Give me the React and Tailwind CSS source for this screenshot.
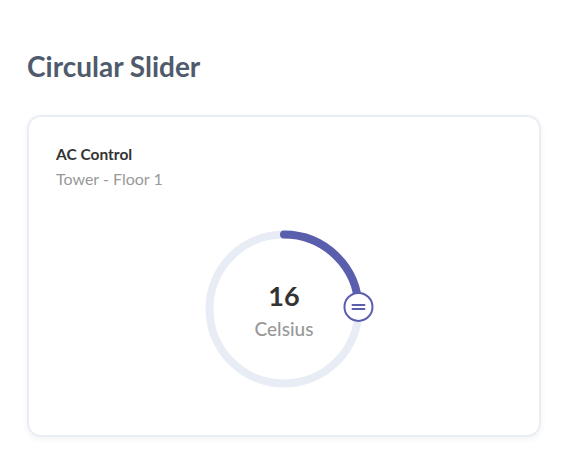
import React from 'react';

const CircularSlider = ({ value, unit }) => {
  const cx = 90;
  const cy = 90;
  const r = 74.5;
  const angle = 88.4; // degrees clockwise from top
  const rad = (angle * Math.PI) / 180;
  const ex = cx + r * Math.sin(rad);
  const ey = cy - r * Math.cos(rad);

  return (
    <div className="relative w-[180px] h-[180px]">
      <svg width="180" height="180" viewBox="0 0 180 180">
        <circle cx={cx} cy={cy} r={r} fill="none" stroke="#e8edf5" strokeWidth="8" />
        <path
          d={`M ${cx} ${cy - r} A ${r} ${r} 0 0 1 ${ex} ${ey}`}
          fill="none"
          stroke="#5a5fad"
          strokeWidth="8"
          strokeLinecap="round"
        />
        <circle cx={ex} cy={ey} r="14" fill="#fff" stroke="#5a5fad" strokeWidth="2" />
        <line x1={ex - 6} y1={ey - 2} x2={ex + 6} y2={ey - 2} stroke="#5a5fad" strokeWidth="2" strokeLinecap="round" />
        <line x1={ex - 6} y1={ey + 2} x2={ex + 6} y2={ey + 2} stroke="#5a5fad" strokeWidth="2" strokeLinecap="round" />
      </svg>
      <div className="absolute inset-0 flex flex-col items-center justify-center pt-[2px]">
        <span className="text-[27px] leading-none font-bold text-[#333]">{value}</span>
        <span className="mt-[10px] text-[19px] leading-none font-medium text-[#999]">{unit}</span>
      </div>
    </div>
  );
};

const App = () => {
  return (
    <div className="min-h-[468px] bg-white px-[27px] pt-[50px]" style={{ fontFamily: 'Lato, "Open Sans", sans-serif' }}>
      <h1 className="text-[28px] leading-[32px] font-bold text-[#4f5b6c]">Circular Slider</h1>

      <div className="mt-[33px] w-[514px] h-[322px] rounded-[14px] border-2 border-[#e9eef5] bg-white shadow-[0_2px_6px_rgba(30,50,90,0.06)] px-[27px] pt-[27px]">
        <p className="text-[15.5px] leading-[20px] font-bold text-[#333]">AC Control</p>
        <p className="mt-[5px] text-[16px] leading-[20px] text-[#999]">Tower - Floor 1</p>

        <div className="flex justify-center mt-[30px]">
          <CircularSlider value="16" unit="Celsius" />
        </div>
      </div>
    </div>
  );
};

export default App;
